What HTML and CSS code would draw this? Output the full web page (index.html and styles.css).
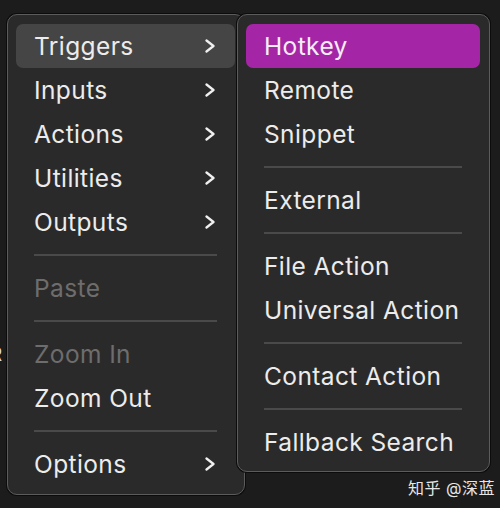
FILE: index.html
```html
<!DOCTYPE html>
<html>
<head>
<meta charset="utf-8">
<link rel="stylesheet" href="styles.css">
</head>
<body>
<div class="stage">
  <span class="bg-letter">R</span>
  <div class="menus">
    <div class="menu main">
      <div class="item active"><span>Triggers</span><svg class="chev" viewBox="0 0 12 14"><path d="M2.5 1.5 L9.5 7 L2.5 12.5"/></svg></div>
      <div class="item"><span>Inputs</span><svg class="chev" viewBox="0 0 12 14"><path d="M2.5 1.5 L9.5 7 L2.5 12.5"/></svg></div>
      <div class="item"><span>Actions</span><svg class="chev" viewBox="0 0 12 14"><path d="M2.5 1.5 L9.5 7 L2.5 12.5"/></svg></div>
      <div class="item"><span>Utilities</span><svg class="chev" viewBox="0 0 12 14"><path d="M2.5 1.5 L9.5 7 L2.5 12.5"/></svg></div>
      <div class="item"><span>Outputs</span><svg class="chev" viewBox="0 0 12 14"><path d="M2.5 1.5 L9.5 7 L2.5 12.5"/></svg></div>
      <div class="sep"></div>
      <div class="item disabled"><span>Paste</span></div>
      <div class="sep"></div>
      <div class="item disabled"><span>Zoom In</span></div>
      <div class="item"><span>Zoom Out</span></div>
      <div class="sep"></div>
      <div class="item"><span>Options</span><svg class="chev" viewBox="0 0 12 14"><path d="M2.5 1.5 L9.5 7 L2.5 12.5"/></svg></div>
    </div>
    <div class="menu sub">
      <div class="item selected"><span>Hotkey</span></div>
      <div class="item"><span>Remote</span></div>
      <div class="item"><span>Snippet</span></div>
      <div class="sep"></div>
      <div class="item"><span>External</span></div>
      <div class="sep"></div>
      <div class="item"><span>File Action</span></div>
      <div class="item"><span>Universal Action</span></div>
      <div class="sep"></div>
      <div class="item"><span>Contact Action</span></div>
      <div class="sep"></div>
      <div class="item"><span>Fallback Search</span></div>
    </div>
  </div>
  <div class="watermark">知乎 @深蓝</div>
</div>
</body>
</html>
```

FILE: styles.css
```css
* { box-sizing: border-box; }
html, body {
  margin: 0;
  padding: 0;
  background: #1c1c1c;
  width: 500px;
  height: 508px;
  overflow: hidden;
}
.stage {
  position: relative;
  width: 500px;
  height: 508px;
  font-family: Inter, "Liberation Sans", "Noto Sans CJK SC", sans-serif;
}
.bg-letter {
  position: absolute;
  left: -10px;
  top: 343px;
  font-size: 19px;
  color: #dcdcdc;
}
.menus {
  display: flex;
  align-items: flex-start;
  padding: 14px 0 0 7px;
}
.menu {
  position: relative;
  background: #2b2a2a;
  border: 1px solid #5c5c5c;
  border-radius: 10px;
  box-shadow: 0 0 0 1px #0c0c0c;
  display: flex;
  flex-direction: column;
}
.main {
  width: 238px;
  padding: 9px 9px 8px 8px;
}
.sub {
  width: 253px;
  margin-left: -8px;
  padding: 9px 9px 7px 8px;
}
.item {
  height: 44px;
  display: flex;
  align-items: center;
  justify-content: space-between;
  padding: 0 19px 0 18px;
  font-size: 24.5px;
  color: #ececec;
  border-radius: 7px;
  letter-spacing: 0.4px;
}
.item.active { background: #464545; }
.item.selected { background: #a426a6; color: #f4eef4; }
.item.disabled { color: #6e6d6d; }
.chev {
  width: 12px;
  height: 14px;
  fill: none;
  stroke: #f0f0f0;
  stroke-width: 2.3;
  stroke-linecap: round;
  stroke-linejoin: round;
}
.sep {
  height: 22px;
  display: flex;
  align-items: center;
  padding: 0 18px;
}
.sep::before {
  content: "";
  display: block;
  width: 100%;
  height: 1.5px;
  background: #4b4a4a;
}
.watermark {
  position: absolute;
  left: 408px;
  top: 475px;
  font-size: 16px;
  color: #e6e6e6;
  letter-spacing: 0.5px;
}
```
